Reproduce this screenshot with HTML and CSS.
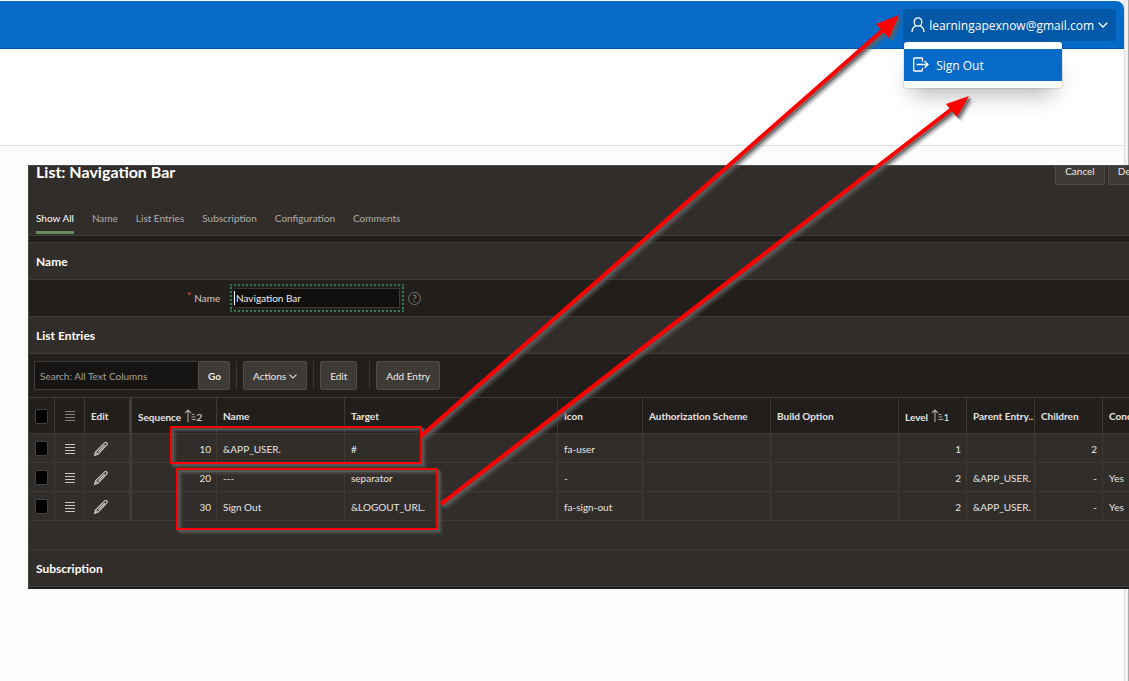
FILE: index.html
```html
<!DOCTYPE html>
<html lang="en">
<head>
<meta charset="utf-8">
<title>Navigation Bar</title>
<link rel="stylesheet" href="styles.css">
</head>
<body>
<svg class="symbols" aria-hidden="true">
  <symbol id="lines" viewBox="0 0 12 12"><path d="M1 1.5h10M1 4.5h10M1 7.5h10M1 10.5h10" stroke="currentColor" stroke-width="1"/></symbol>
  <symbol id="pencil" viewBox="0 0 16 16"><path d="M1.700 14.300l.9-3.500L12 1.600q.6-.5 1.200 0l.9.9q.5.600 0 1.200L4.900 13.300zM2.600 10.800l2.300 2.500M11.800 4.200L5.200 10.800" fill="none" stroke="currentColor" stroke-width="1.2"/></symbol>
  <symbol id="sort" viewBox="0 0 13 14"><path d="M4 13V1M1 4l3-3 3 3M7.500 5.500h3M7.500 8h4M7.500 10.500h5" fill="none" stroke="currentColor" stroke-width="1.1"/></symbol>
  <symbol id="chevron" viewBox="0 0 10 6"><path d="M.7.8L5 5 9.300.8" fill="none" stroke="currentColor" stroke-width="1.3"/></symbol>
</svg>
<div class="window">
  <header class="topbar">
    <div class="user">
      <button class="user-button" type="button">
        <svg class="icon-user" viewBox="0 0 14 16"><ellipse cx="7" cy="5" rx="3.800" ry="4.200"/><path d="M1 15c0-3.800 1.500-5.300 4-6.200M13 15c0-3.800-1.500-5.300-4-6.200"/></svg>
        <span>learningapexnow@gmail.com</span>
        <svg class="icon-chevron"><use href="#chevron"/></svg>
      </button>
      <div class="menu">
        <a class="menu-item" href="#">
          <svg class="icon-out" viewBox="0 0 16 16"><path d="M9.500 4.500V1.500L8.500 1H1.500q-.8 0-.8.8v11.400q0 .8.8.8h7q1 0 1-1v-2M3.500 7.500H15M11.500 4.200L15 7.500l-3.500 3.300"/></svg>
          <span>Sign Out</span>
        </a>
      </div>
    </div>
  </header>
  <div class="band"></div>
  <main class="editor">
    <div class="title-row">
      <h1>List: Navigation Bar</h1>
      <div class="title-actions"><button class="btn" type="button">Cancel</button><button class="btn" type="button">Delete</button></div>
    </div>
    <nav class="tabs">
      <a class="tab tab-active" href="#">Show All</a><a class="tab" href="#">Name</a><a class="tab" href="#">List Entries</a><a class="tab" href="#">Subscription</a><a class="tab" href="#">Configuration</a><a class="tab" href="#">Comments</a>
    </nav>
    <h2 class="section-title">Name</h2>
    <div class="field">
      <label for="name"><span class="required">*</span>Name</label>
      <span class="focus-ring"><span class="caret"></span><input id="name" type="text" value="Navigation Bar"></span>
      <button class="help" type="button" aria-label="Help">?</button>
    </div>
    <h2 class="section-title">List Entries</h2>
    <div class="toolbar">
      <div class="search"><input type="text" placeholder="Search: All Text Columns" aria-label="Search"><button class="btn go" type="button">Go</button></div>
      <span class="divider"></span>
      <button class="btn actions" type="button">Actions<svg><use href="#chevron"/></svg></button>
      <span class="divider"></span>
      <button class="btn" type="button">Edit</button>
      <span class="divider divider-wide"></span>
      <button class="btn" type="button">Add Entry</button>
    </div>
    <div class="grid">
      <table>
        <colgroup><col class="w-check"><col class="w-menu"><col class="w-edit"><col class="w-seq"><col class="w-wide"><col class="w-target"><col class="w-icon"><col class="w-wide"><col class="w-wide"><col class="w-num"><col class="w-num"><col class="w-num"><col class="w-wide"></colgroup>
        <thead>
          <tr><th><input type="checkbox" aria-label="Select all"></th><th class="dim"><svg class="lines"><use href="#lines"/></svg></th><th class="frozen">Edit</th><th>Sequence <svg class="sort"><use href="#sort"/></svg><span class="order">2</span></th><th>Name</th><th>Target</th><th>Icon</th><th>Authorization Scheme</th><th>Build Option</th><th>Level <svg class="sort"><use href="#sort"/></svg><span class="order">1</span></th><th class="tight">Parent Entry..</th><th>Children</th><th>Conditional</th></tr>
        </thead>
        <tbody>
          <tr><td><input type="checkbox" aria-label="Select 10"></td><td><svg class="lines"><use href="#lines"/></svg></td><td class="frozen"><svg class="pencil"><use href="#pencil"/></svg></td><td class="num">10</td><td>&amp;APP_USER.</td><td>#</td><td>fa-user</td><td></td><td></td><td class="num">1</td><td></td><td class="num">2</td><td></td></tr>
          <tr><td><input type="checkbox" aria-label="Select 20"></td><td><svg class="lines"><use href="#lines"/></svg></td><td class="frozen"><svg class="pencil"><use href="#pencil"/></svg></td><td class="num">20</td><td>---</td><td>separator</td><td>-</td><td></td><td></td><td class="num">2</td><td>&amp;APP_USER.</td><td class="num">-</td><td>Yes</td></tr>
          <tr><td><input type="checkbox" aria-label="Select 30"></td><td><svg class="lines"><use href="#lines"/></svg></td><td class="frozen"><svg class="pencil"><use href="#pencil"/></svg></td><td class="num">30</td><td>Sign Out</td><td>&amp;LOGOUT_URL.</td><td>fa-sign-out</td><td></td><td></td><td class="num">2</td><td>&amp;APP_USER.</td><td class="num">-</td><td>Yes</td></tr>
        </tbody>
      </table>
    </div>
    <h2 class="section-title">Subscription</h2>
  </main>
</div>
<svg class="annotations" width="1129" height="681" viewBox="0 0 1129 681" aria-hidden="true">
  <g class="marks">
    <rect x="171" y="427" width="250" height="36"/>
    <rect x="177" y="469" width="260" height="60"/>
    <path class="shaft" d="M421 436L884 29M441 504L953 108"/>
    <path class="head" d="M899 15L889 38L876 24ZM969 96L957 117L946 104Z"/>
  </g>
</svg>
</body>
</html>
```
FILE: styles.css
```css
* { box-sizing: border-box; }
body { margin: 0; background: #f1f1f1; font-family: Lato, "Open Sans", sans-serif; font-size: 10px; overflow: hidden; }
button, input { font: inherit; color: inherit; }
a { color: inherit; text-decoration: none; }
h1, h2 { margin: 0; }
.symbols { display: none; }
.window { min-height: 100vh; padding-top: 1px; margin-right: 4px; border-right: 1px solid #dedede; background: #fcfcfc; box-shadow: 3px 0 #f1f1f1, 4px 0 #aaa; }
.topbar { display: flex; justify-content: flex-end; height: 48px; padding: 8px 8px 0 0; background: #056ac8; border-bottom: 1px solid #0059ad; border-top-right-radius: 8px; color: #fff; font-family: "Open Sans", sans-serif; font-size: 12px; }
.user { position: relative; }
.user-button { display: flex; align-items: center; gap: 4px; height: 32px; padding: 0 8px; border: 0; border-radius: 2px; background: #0358a8; }
.icon-user, .icon-out { width: 14px; height: 16px; fill: none; stroke: #fff; stroke-width: 1.3; }
.icon-out { width: 16px; }
.icon-chevron { width: 10px; height: 6px; }
.menu { position: absolute; top: 33px; left: 1px; z-index: 2; width: 158px; padding: 7px 0; background: #fff; border-radius: 3px; box-shadow: 0 0 1px 1px rgba(0,0,0,.1), 0 14px 22px -8px rgba(0,0,0,.3); }
.menu-item { display: flex; align-items: center; gap: 7px; height: 32px; padding: 0 9px; background: #056ac8; }
.band { height: 97px; background: #fff; border-bottom: 1px solid #e2e2e2; }
.editor { margin: 19px -5px 0 28px; position: relative; background: #312d2a; color: #e8e5e2; border-top: 1px solid #4b4b48; border-left: 1px solid #454441; border-bottom: 2px solid #201d1b; overflow: hidden; }
.title-row { display: flex; justify-content: space-between; height: 44px; padding-left: 7px; }
h1 { height: 24px; margin-top: -5px; color: #fff; font-size: 16px; line-height: 22px; white-space: nowrap; }
.title-actions { display: flex; gap: 3px; margin: -10px -28px 0 0; }
.btn { height: 29px; padding: 0 9px; border: 1px solid #504c48; border-radius: 2px; background: #3e3a36; color: #eeebe8; white-space: nowrap; }
.tabs { display: flex; gap: 18px; height: 26px; margin-bottom: 6px; padding-left: 7px; border-bottom: 1px solid #403c39; }
.tab { height: 24px; line-height: 17px; color: #b2aeaa; }
.tab-active { color: #fff; border-bottom: 3px solid #648d5b; }
.tabs + .section-title { box-shadow: 0 -6px #221e1b; }
.section-title { height: 38px; padding-left: 7px; border: solid #403c39; border-width: 1px 0; color: #fff; font-size: 12px; line-height: 37px; }
.field { display: flex; align-items: center; height: 36px; padding-left: 158px; background: #221e1b; }
.field label { display: flex; gap: 3px; width: 34px; margin-right: 9px; color: #d4d0cc; }
.required { height: 12px; line-height: 6px; color: #db4b3a; font-weight: bold; }
.focus-ring { display: flex; align-items: center; width: 174px; height: 28px; padding: 2px; border: 2px dotted #2f8057; border-radius: 2px; }
.focus-ring input { width: 100%; height: 20px; padding: 0 0 0 1px; border: 1px solid #3b3835; border-left: 0; background: #100f0d; color: #f0eeec; outline: 0; }
.caret { width: 1px; height: 14px; background: #fff; }
.help { width: 13px; height: 13px; margin-left: 4px; padding: 0; border: 1px solid #77736f; border-radius: 50%; background: none; color: #8c8884; line-height: 10px; }
.toolbar { display: flex; align-items: center; gap: 6px; height: 43px; padding-left: 5px; background: #221e1b; }
.search { display: flex; }
.search input { width: 164px; height: 29px; padding: 0 5px; border: 1px solid #403c39; border-right: 0; background: #171513; }
.search input::placeholder { color: #a5a19d; opacity: 1; }
.go { width: 32px; font-weight: bold; }
.divider { width: 1px; height: 29px; background: #3a3633; }
.divider-wide { margin-left: 6px; }
.actions svg { width: 8px; height: 5px; margin: 0 0 1px 3px; }
.grid { overflow: hidden; padding-bottom: 28px; border-top: 1px solid #403c39; }
table { width: 1201px; table-layout: fixed; border-collapse: separate; border-spacing: 0; }
.w-check { width: 26px; } .w-menu { width: 30px; } .w-edit { width: 47px; } .w-seq { width: 85px; }
.w-wide { width: 128px; } .w-target { width: 213px; } .w-icon { width: 85px; } .w-num { width: 68px; }
th, td { padding: 1px 6px 0; border: solid #3d3936; border-width: 0 1px 1px 0; text-align: left; white-space: nowrap; overflow: hidden; vertical-align: middle; }
th { height: 36px; background: #221e1b; font-weight: bold; }
th.tight { padding-right: 0; }
td { height: 29px; }
td.num { text-align: right; padding-right: 5px; }
.frozen { border-right: 3px solid #3f3b38; }
.grid input { appearance: none; display: block; width: 13px; height: 15px; margin: 0; border: 1px solid #45413e; border-radius: 2px; background: #000; }
.lines { display: block; width: 12px; height: 12px; margin-left: 3px; color: #c9c5c1; }
.dim .lines { color: #86827e; }
.pencil { display: block; width: 16px; height: 16px; margin-left: 2px; color: #cbc7c3; }
.sort { width: 13px; height: 14px; vertical-align: -2px; color: #aaa6a2; }
.order { font-weight: normal; }
.annotations { position: absolute; top: 0; left: 0; z-index: 3; pointer-events: none; }
.marks { fill: none; stroke: #f00; stroke-width: 2; filter: drop-shadow(2px 2px 0 rgba(95,95,95,.6)) drop-shadow(2px 2px 1px rgba(95,95,95,.7)); }
.shaft { stroke-width: 4; }
.head { fill: #f00; stroke: none; }
```
